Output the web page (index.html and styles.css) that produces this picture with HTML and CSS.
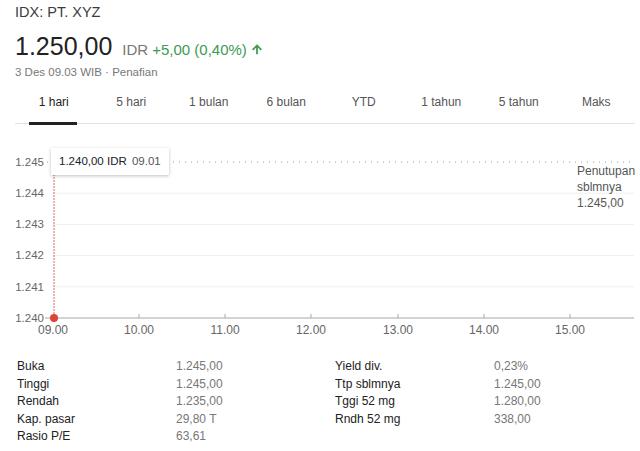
FILE: index.html
```html
<!DOCTYPE html>
<html lang="id">
<head>
  <meta charset="UTF-8">
  <meta name="viewport" content="width=device-width, initial-scale=1.0">
  <title>IDX: PT. XYZ</title>
  <link rel="stylesheet" href="styles.css">
</head>
<body>
  <div class="quote">
    <div class="exchange">IDX: PT. XYZ</div>
    <div class="price-row">
      <span class="price">1.250,00</span>
      <span class="currency">IDR</span>
      <span class="change">+5,00 (0,40%)</span>
      <svg class="arrow" viewBox="0 0 24 24" width="14" height="14">
        <path d="M3.5 12.5l2 2L10.5 9.5V21h3V9.5l5 5 2-2L12 4z"></path>
      </svg>
    </div>
    <div class="meta">3 Des 09.03 WIB · Penafian</div>
  </div>

  <div class="tabs">
    <div class="tab active">1 hari</div>
    <div class="tab">5 hari</div>
    <div class="tab">1 bulan</div>
    <div class="tab">6 bulan</div>
    <div class="tab">YTD</div>
    <div class="tab">1 tahun</div>
    <div class="tab">5 tahun</div>
    <div class="tab">Maks</div>
  </div>

  <div class="chart">
    <svg class="chart-svg" viewBox="0 124 640 216" width="640" height="216">
      <!-- garis grid -->
      <g class="grid">
        <line x1="53" y1="193.2" x2="634" y2="193.2"></line>
        <line x1="53" y1="224.4" x2="634" y2="224.4"></line>
        <line x1="53" y1="255.6" x2="634" y2="255.6"></line>
        <line x1="53" y1="286.8" x2="634" y2="286.8"></line>
      </g>
      <line class="prev-close" x1="47" y1="162" x2="634" y2="162"></line>

      <g class="y-labels">
        <text x="44" y="166">1.245</text>
        <text x="44" y="197">1.244</text>
        <text x="44" y="228">1.243</text>
        <text x="44" y="259">1.242</text>
        <text x="44" y="291">1.241</text>
        <text x="44" y="322">1.240</text>
      </g>

      <line class="axis" x1="45" y1="318" x2="634" y2="318"></line>
      <g class="ticks">
        <line x1="139" y1="314" x2="139" y2="318"></line>
        <line x1="225" y1="314" x2="225" y2="318"></line>
        <line x1="311" y1="314" x2="311" y2="318"></line>
        <line x1="398" y1="314" x2="398" y2="318"></line>
        <line x1="484" y1="314" x2="484" y2="318"></line>
        <line x1="570" y1="314" x2="570" y2="318"></line>
      </g>
      <g class="x-labels">
        <text x="53" y="334">09.00</text>
        <text x="139" y="334">10.00</text>
        <text x="225" y="334">11.00</text>
        <text x="311" y="334">12.00</text>
        <text x="398" y="334">13.00</text>
        <text x="484" y="334">14.00</text>
        <text x="570" y="334">15.00</text>
      </g>

      <text class="prev-label" x="577" y="175">Penutupan</text>
      <text class="prev-label" x="577" y="191">sblmnya</text>
      <text class="prev-label" x="577" y="207">1.245,00</text>

      <line class="cursor" x1="54" y1="162" x2="54" y2="318"></line>
      <circle class="point" cx="54" cy="318" r="4"></circle>
    </svg>
    <div class="tooltip"><b>1.240,00 IDR</b> <span>09.01</span></div>
  </div>

  <div class="stats">
    <div class="stat-col">
      <div class="stat"><span class="stat-label">Buka</span><span class="stat-value">1.245,00</span></div>
      <div class="stat"><span class="stat-label">Tinggi</span><span class="stat-value">1.245,00</span></div>
      <div class="stat"><span class="stat-label">Rendah</span><span class="stat-value">1.235,00</span></div>
      <div class="stat"><span class="stat-label">Kap. pasar</span><span class="stat-value">29,80 T</span></div>
      <div class="stat"><span class="stat-label">Rasio P/E</span><span class="stat-value">63,61</span></div>
    </div>
    <div class="stat-col">
      <div class="stat"><span class="stat-label">Yield div.</span><span class="stat-value">0,23%</span></div>
      <div class="stat"><span class="stat-label">Ttp sblmnya</span><span class="stat-value">1.245,00</span></div>
      <div class="stat"><span class="stat-label">Tggi 52 mg</span><span class="stat-value">1.280,00</span></div>
      <div class="stat"><span class="stat-label">Rndh 52 mg</span><span class="stat-value">338,00</span></div>
    </div>
  </div>
</body>
</html>
```

FILE: styles.css
```css
body {
  margin: 0;
  font-family: 'Liberation Sans', Arial, sans-serif;
  background-color: #fff;
  color: #222;
  overflow: hidden;
}
.quote {
  padding: 3px 15px 0;
}
.exchange {
  font-size: 14.5px;
  line-height: 18px;
  color: #3c3c3c;
}
.price-row {
  display: flex;
  align-items: baseline;
  margin-top: 10px;
  line-height: 30px;
}
.price {
  font-size: 25px;
  color: #222;
  margin-right: 10px;
}
.currency {
  font-size: 15px;
  color: #777;
  margin-right: 4px;
}
.change {
  font-size: 15px;
  color: #3d9a50;
  margin-right: 3px;
}
.arrow {
  fill: #3d9a50;
  align-self: center;
  margin-top: 2px;
}
.meta {
  font-size: 11.5px;
  line-height: 14px;
  color: #777;
}
.tabs {
  display: flex;
  width: 620px;
  margin: 15px 0 0 15px;
  border-bottom: 1px solid #e2e2e2;
}
.tab {
  position: relative;
  flex: 1;
  text-align: center;
  font-size: 12px;
  line-height: 16px;
  padding-bottom: 13px;
  color: #555;
}
.tab.active {
  color: #222;
}
.tab.active::after {
  content: '';
  position: absolute;
  left: 50%;
  bottom: -2px;
  width: 48px;
  height: 3px;
  margin-left: -25px;
  background-color: #222;
}
.chart {
  position: relative;
  height: 216px;
}
.chart-svg {
  display: block;
}
.grid line {
  stroke: #efefef;
  stroke-width: 1;
}
.prev-close {
  stroke: #999;
  stroke-width: 1;
  stroke-dasharray: 1 5;
}
.axis {
  stroke: #a8a8a8;
  stroke-width: 1.2;
}
.ticks line {
  stroke: #a8a8a8;
  stroke-width: 1;
}
.y-labels text {
  font-size: 11.5px;
  fill: #666;
  text-anchor: end;
}
.x-labels text {
  font-size: 12px;
  fill: #666;
  text-anchor: middle;
}
.prev-label {
  font-size: 12px;
  fill: #555;
}
.cursor {
  stroke: #d9695f;
  stroke-width: 1;
  stroke-dasharray: 2 1;
}
.point {
  fill: #db4437;
}
.tooltip {
  position: absolute;
  left: 51px;
  top: 24px;
  width: 118px;
  height: 27px;
  box-sizing: border-box;
  padding: 0 8px;
  background-color: #fff;
  box-shadow: 0 1px 3px rgba(0, 0, 0, 0.25);
  font-size: 11.5px;
  line-height: 27px;
  white-space: nowrap;
}
.tooltip b {
  font-weight: normal;
  color: #222;
}
.tooltip span {
  color: #555;
  margin-left: 2px;
}
.stats {
  display: flex;
  margin-top: 18px;
  padding-left: 17px;
}
.stat-col {
  flex-shrink: 0;
  width: 318px;
}
.stat {
  display: flex;
  font-size: 12px;
  line-height: 17.5px;
}
.stat-label {
  width: 159px;
  color: #222;
}
.stat-value {
  color: #777;
}
```
